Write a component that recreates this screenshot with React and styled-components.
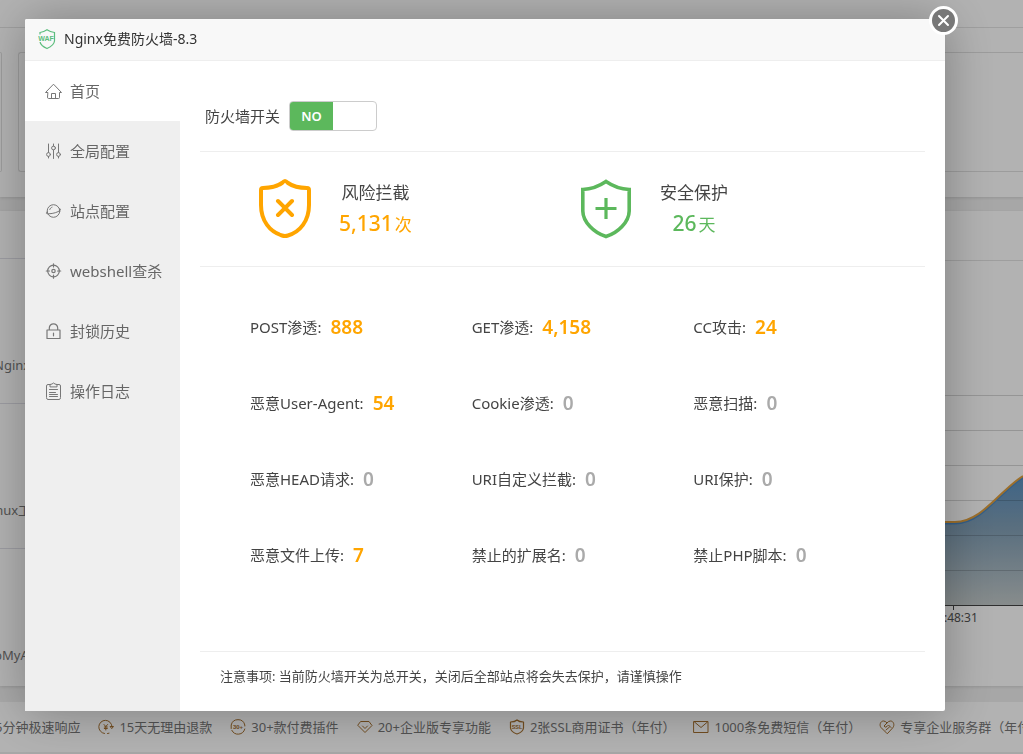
import React, { useState } from "react";
import styled, { createGlobalStyle, css } from "styled-components";

const GlobalStyle = createGlobalStyle`
  * { box-sizing: border-box; }
  html, body { height: 100%; }
  body {
    margin: 0;
    overflow: hidden;
    background: #f0f0f0;
    color: #444;
    font-family: "Noto Sans", "Noto Sans CJK SC", sans-serif;
    font-size: 15px;
    line-height: 20px;
  }
  button, input { font: inherit; }
  p, h1, h2, ul, dl, dd { margin: 0; padding: 0; }
`;

/* ---------- dashboard behind the dialog ---------- */

const Page = styled.div`
  min-height: 100vh;
  overflow: hidden;
  color: #777;
  font-size: 13px;
`;

const Panel = styled.section`
  background: #fff;
  box-shadow: 0 1px 3px rgba(0, 0, 0, 0.12);
`;

const Overview = styled(Panel)`
  height: 197px;
  margin-bottom: 14px;
`;

const OverviewBar = styled.div`
  height: 28px;
  border-bottom: 1px solid #e4e4e4;
`;

const Cards = styled.div`
  display: flex;
  gap: 16px;
  padding-top: 24px;
`;

const Card = styled.div`
  flex: ${(p) => (p.$edge ? "0 0 2px" : "1")};
  height: 120px;
  border: 1px solid #e0e0e0;
  border-width: ${(p) => (p.$edge ? "1px 1px 1px 0" : "1px 0 1px 1px")};
  border-radius: ${(p) => (p.$edge ? "0 3px 3px 0" : "3px 0 0 3px")};
`;

const Columns = styled.div`
  display: grid;
  grid-template-columns: 1fr 1fr;
  gap: 16px;
  margin-bottom: 16px;
`;

const AppList = styled(Panel)`
  height: 475px;
  padding-top: 47px;
`;

const AppCell = styled.div`
  height: 145px;
  padding-top: 96px;
  border-top: 1px solid #e0e0e8;
  text-indent: ${(p) => p.$shift}px;
  white-space: nowrap;
`;

const Traffic = styled(Panel)`
  height: 475px;
  display: flex;
  flex-direction: column;
  align-items: flex-end;
`;

const TrafficHead = styled.div`
  width: 100%;
  height: 50px;
  border-bottom: 1px solid #e2e2e2;
`;

const Chart = styled.svg`
  display: block;
  width: 240px;
  height: 425px;
`;

const Perks = styled.ul`
  display: flex;
  align-items: flex-start;
  gap: 18px;
  height: 50px;
  padding: 15px 0 0;
  background: #fff;
  list-style: none;
  white-space: nowrap;
  margin-left: -5px;
`;

const Perk = styled.li`
  display: flex;
  flex: none;
  align-items: center;
  gap: 5px;
  svg { width: 16px; height: 16px; }
`;

const Shade = styled.div`
  position: fixed;
  inset: 0;
  background: rgba(0, 0, 0, 0.3);
`;

/* ---------- dialog ---------- */

const Dialog = styled.section`
  position: fixed;
  top: 19px;
  left: 25px;
  right: 78px;
  background: #fff;
  border-radius: 2px;
  box-shadow: 1px 1px 50px rgba(0, 0, 0, 0.3);
`;

const DialogHead = styled.header`
  display: flex;
  align-items: center;
  gap: 8px;
  height: 42px;
  padding: 0 13px 2px;
  border-bottom: 1px solid #eee;
  border-radius: 2px 2px 0 0;
  background: #f8f8f8;
  color: #333;
`;

const DialogTitle = styled.h1`
  font-size: 14px;
  font-weight: 400;
`;

const CloseButton = styled.button`
  position: absolute;
  top: -13px;
  right: -13px;
  width: 29px;
  height: 29px;
  padding: 0;
  border: 3px solid #fff;
  border-radius: 50%;
  background: #787878;
  cursor: pointer;
  svg { display: block; margin: auto; }
`;

const DialogBody = styled.div`
  display: flex;
`;

const Side = styled.nav`
  display: flex;
  flex: 0 0 155px;
  flex-direction: column;
  background: #efefef;
`;

const SideItem = styled.button`
  display: flex;
  align-items: center;
  gap: 7px;
  height: 60px;
  padding: 0 0 0 19px;
  border: 0;
  background: ${(p) => (p.$active ? "#fff" : "transparent")};
  color: #666;
  text-align: left;
  white-space: nowrap;
  cursor: pointer;
  svg { width: 19px; height: 19px; }
`;

const Main = styled.main`
  flex: 1;
  min-width: 0;
  padding: 0 20px;
`;

const rule = css`border-bottom: 1px solid #eee;`;

const SwitchRow = styled.label`
  display: flex;
  align-items: center;
  gap: 9px;
  padding: 40px 0 20px 5px;
  ${rule}
`;

const Toggle = styled.span`
  position: relative;
  display: flex;
  width: 88px;
  height: 30px;
  overflow: hidden;
  border: 1px solid #ccc;
  border-radius: 4px;
  background: #fff;
  justify-content: ${(p) => (p.$on ? "flex-start" : "flex-end")};
`;

const ToggleInput = styled.input`
  position: absolute;
  inset: 0;
  width: 100%;
  height: 100%;
  margin: 0;
  opacity: 0;
  cursor: pointer;
`;

const ToggleText = styled.span`
  width: 43px;
  background: #5cb85c;
  color: #fff;
  font-size: 13px;
  font-weight: 600;
  line-height: 29px;
  text-align: center;
`;

const Summary = styled.div`
  display: grid;
  grid-template-columns: 1fr 1fr;
  padding: 26px 25px 26px 58px;
  ${rule}
`;

const SummaryItem = styled.div`
  display: flex;
  gap: 25px;
  svg { flex: none; width: 56px; height: 61px; }
`;

const SummaryText = styled.div`
  text-align: center;
`;

const SummaryLabel = styled.h2`
  font-size: 17px;
  font-weight: 400;
  line-height: 30px;
`;

const SummaryValue = styled.p`
  color: ${(p) => p.$color};
  font-size: 17px;
  line-height: 30px;
  strong { margin-right: 2px; font-size: 21px; font-weight: 500; }
`;

const Counters = styled.dl`
  display: grid;
  grid-template-columns: repeat(3, 1fr);
  padding: 22px 10px 58px 50px;
`;

const Counter = styled.div`
  display: flex;
  align-items: center;
  gap: 9px;
  height: 76px;
  white-space: nowrap;
`;

const CounterValue = styled.dd`
  color: ${(p) => (p.$hot ? "#ffa500" : "#aaa")};
  font-size: 19px;
  font-weight: 600;
`;

const Note = styled.footer`
  height: 60px;
  padding: 14px 20px 0;
  border-top: 1px solid #eee;
  font-size: 13px;
`;

/* ---------- drawings ---------- */

const Line = ({ size = 19, box = 19, color = "#777", width = 1, children }) => (
  <svg width={size} height={size} viewBox={`0 0 ${box} ${box}`} fill="none" stroke={color}
    strokeWidth={width} strokeLinecap="round" strokeLinejoin="round" aria-hidden="true">
    {children}
  </svg>
);

const sideIcons = {
  home: <Line><path d="M3.5 10.5H1.5L9.500 2.200 17.500 10.5H15.500V15.500Q15.500 16.500 14.500 16.500H4.500Q3.500 16.500 3.500 15.500ZM7.500 16.500V11.500H11.500V16.500" /></Line>,
  sliders: <Line><path d="M4.500 2V10.500M4.500 14.500V16M9.500 2V4M9.500 8V16.500M14.500 2V10.500M14.500 14.500V16" /><circle cx="4.500" cy="12.500" r="1.900" /><circle cx="9.500" cy="6" r="1.900" /><circle cx="14.500" cy="12.500" r="1.900" /></Line>,
  planet: <Line><circle cx="9.500" cy="9" r="6.300" /><path d="M3.300 9.500C1.500 11.200 2 12 5 11.800C9 11.600 14 10.300 16 8.300C17 7.200 16.500 6.700 15.500 6.700M5.800 7.500C6.200 6.300 7 5.500 8 5.200" /></Line>,
  target: <Line width={1.2}><circle cx="9.500" cy="9" r="5.800" /><circle cx="9.500" cy="9" r="1.700" /><path d="M9.500 1.800V5M9.500 13V16.200M2.300 9H5.500M13.500 9H16.700" /></Line>,
  lock: <Line width={1.2}><path d="M3 8H16V16.500H3ZM5.300 8V6C5.300 3.500 7.200 1.800 9.500 1.800S13.700 3.500 13.700 6V8M9.500 11V13.800" /></Line>,
  clipboard: <Line><path d="M6 2.500H4Q2.500 2.500 2.500 4V15.500Q2.500 17.500 4 17.500H15Q16.500 17.500 16.500 15.500V4Q16.500 2.500 15 2.500H13M6 4.500V2.500L8 2Q9.500 0 11 2L13 2.500V4.500ZM5.500 7.500H13.500M5.500 10.500H11.500M5.500 12.500H13.500M5.500 14.500H13.500" /></Line>,
};

const WafLogo = () => (
  <svg width="18" height="22" viewBox="0 0 18 22" aria-hidden="true">
    <path d="M2 6.500V4.500Q6 4 9 1.800Q12 4 16.500 4.500V13Q16 17.500 9 20.500Q3 18 2 14" fill="none" stroke="#5cbd7d" strokeWidth="1.200" />
    <path d="M0 7H15V14H0Z" fill="#f8f8f8" />
    <text x="8" y="13" textAnchor="middle" fontSize="7" fontWeight="700" fontFamily="Liberation Sans, sans-serif" fill="#5cbd7d">WAF</text>
  </svg>
);

const ShieldCross = () => (
  <svg viewBox="0 0 56 61" fill="none" stroke="#ffa500" strokeLinecap="round" strokeLinejoin="round" aria-hidden="true">
    <path d="M27 3Q26 3 24 5Q17 10 5 10Q3 10 3 12V27C3 43 12 54 24 57.500Q27 58.500 30 57.500C42 54 51 43 51 27V12Q51 10 49 10Q37 10 30 5Q28 3 27 3Z" strokeWidth="4" />
    <path d="M20 23 34 37M34 23 20 37" strokeWidth="4" />
  </svg>
);

const ShieldPlus = () => (
  <svg viewBox="0 0 56 61" fill="none" stroke="#5cb85c" aria-hidden="true">
    <path d="M27 3.500Q16 11 3.800 11.500V33C4 44 15 55 27 58.500C39 55 50 44 50.200 33V11.500Q38 11 27 3.500Z" strokeWidth="3.600" />
    <path d="M27 20V41M16.500 30.500H37.500" strokeWidth="3.200" />
  </svg>
);

const gold = "#a5702f";
const Small = ({ children }) => <Line size={16} box={16} color={gold}>{children}</Line>;
const Tiny = ({ y, size, children }) => (
  <text x="8" y={y} textAnchor="middle" fontSize={size} fontWeight="700" stroke="none" fill={gold} fontFamily="Liberation Sans, sans-serif">{children}</text>
);

const perkIcons = {
  refund: <Small><path d="M6.500 14.500A6.600 6.600 0 1 1 14 7.500M12.500 7.500H15.500L14 9.300ZM9.500 14.500 11 14.200" /><path d="M6 5.500 7.800 7.500 9.600 5.500M7.800 7.500V11M6.300 8H9.300M6.300 9.500H9.300" /></Small>,
  plugins: <Small><path d="M1.200 9.500V6A7 7 0 0 1 14.800 6V7M14.800 10A7 7 0 0 1 1.800 11.300" /><Tiny y="10.300" size="6">30+</Tiny></Small>,
  gem: <Small><path d="M4 2.500H12L15 6.500 8 13.500 1 6.500ZM5.500 7 8 9.500 10.500 7" /></Small>,
  ssl: <Small><path d="M1.500 3Q6 3 8 1Q10 3 14.500 3V9Q14 13 8 15Q2 13 1.500 9Z" strokeWidth="1.200" /><Tiny y="9.800" size="5.500">SSL</Tiny></Small>,
  mail: <Small><path d="M1 2.500H15V13.500H1ZM1.500 3 8 8.500 14.500 3" /></Small>,
  heart: <Small><path d="M8 14.500 2 8.500C0 6 1.500 2 4.500 2Q6.500 2 8 4Q9.500 2 11.500 2C14.500 2 16 6 14 8.500ZM8 4 5 7Q6 9 8 7.500L9.500 6 12 8.500M7 11 10.500 8" /></Small>,
};

const perks = [
  { text: "5分钟极速响应" },
  { icon: "refund", text: "15天无理由退款" },
  { icon: "plugins", text: "30+款付费插件" },
  { icon: "gem", text: "20+企业版专享功能" },
  { icon: "ssl", text: "2张SSL商用证书（年付）" },
  { icon: "mail", text: "1000条免费短信（年付）" },
  { icon: "heart", text: "专享企业服务群（年付）" },
];

const menu = [
  ["home", "首页"],
  ["sliders", "全局配置"],
  ["planet", "站点配置"],
  ["target", "webshell查杀"],
  ["lock", "封锁历史"],
  ["clipboard", "操作日志"],
];

const counters = [
  ["POST渗透", "888"], ["GET渗透", "4,158"], ["CC攻击", "24"],
  ["恶意User-Agent", "54"], ["Cookie渗透", "0"], ["恶意扫描", "0"],
  ["恶意HEAD请求", "0"], ["URI自定义拦截", "0"], ["URI保护", "0"],
  ["恶意文件上传", "7"], ["禁止的扩展名", "0"], ["禁止PHP脚本", "0"],
];

const TrafficChart = () => (
  <Chart viewBox="0 0 240 425" aria-hidden="true">
    <defs>
      <linearGradient id="fill" x1="0" y1="0" x2="0" y2="1">
        <stop offset="0" stopColor="#5a90c0" />
        <stop offset="0.4" stopColor="#819fb6" />
        <stop offset="1" stopColor="#c2c9c9" />
      </linearGradient>
    </defs>
    <path d="M0 261H172C199 261 218 228 240 215V344H0Z" fill="url(#fill)" />
    <path d="M0 134.500H240M0 169.500H240M0 204.500H240M0 239.500H240M0 274.500H240M0 309.500H240" stroke="#000" strokeOpacity="0.160" />
    <path d="M0 262.500H172C199 262.500 218 229.500 240 216.500" fill="none" stroke="#4a88c4" strokeWidth="2" />
    <path d="M0 261H172C199 261 218 228 240 215" fill="none" stroke="#e0a040" strokeWidth="2" />
    <path d="M0 344.500H240M170.500 344V349" stroke="#444" />
    <text x="171" y="361" textAnchor="middle" fontSize="12" fill="#555">16:48:31</text>
  </Chart>
);

export default function App() {
  const [on, setOn] = useState(true);
  const [active, setActive] = useState("home");

  return (
    <>
      <GlobalStyle />
      <Page>
        <Overview>
          <OverviewBar />
          <Cards>
            <Card $edge />
            <Card />
          </Cards>
        </Overview>
        <Columns>
          <AppList>
            <AppCell $shift={-6}>Nginx</AppCell>
            <AppCell $shift={-15}>Linux工</AppCell>
            <AppCell $shift={-22}>phpMyA</AppCell>
          </AppList>
          <Traffic>
            <TrafficHead />
            <TrafficChart />
          </Traffic>
        </Columns>
        <Perks>
          {perks.map((p) => (
            <Perk key={p.text}>
              {p.icon && perkIcons[p.icon]}
              <span>{p.text}</span>
            </Perk>
          ))}
        </Perks>
      </Page>
      <Shade />
      <Dialog role="dialog" aria-labelledby="dialog-title">
        <DialogHead>
          <WafLogo />
          <DialogTitle id="dialog-title">Nginx免费防火墙-8.3</DialogTitle>
        </DialogHead>
        <CloseButton type="button" aria-label="关闭">
          <Line size={13} box={13} color="#fff" width={2}><path d="M2 2 11 11M11 2 2 11" /></Line>
        </CloseButton>
        <DialogBody>
          <Side>
            {menu.map(([id, label]) => (
              <SideItem key={id} type="button" $active={active === id} onClick={() => setActive(id)}>
                {sideIcons[id]}
                <span>{label}</span>
              </SideItem>
            ))}
          </Side>
          <Main>
            <SwitchRow>
              <span>防火墙开关</span>
              <Toggle $on={on}>
                <ToggleText>{on ? "NO" : "OFF"}</ToggleText>
                <ToggleInput type="checkbox" role="switch" checked={on} onChange={() => setOn(!on)} />
              </Toggle>
            </SwitchRow>
            <Summary>
              <SummaryItem>
                <ShieldCross />
                <SummaryText>
                  <SummaryLabel>风险拦截</SummaryLabel>
                  <SummaryValue $color="#ffa500"><strong>5,131</strong>次</SummaryValue>
                </SummaryText>
              </SummaryItem>
              <SummaryItem>
                <ShieldPlus />
                <SummaryText>
                  <SummaryLabel>安全保护</SummaryLabel>
                  <SummaryValue $color="#5cb85c"><strong>26</strong>天</SummaryValue>
                </SummaryText>
              </SummaryItem>
            </Summary>
            <Counters>
              {counters.map(([label, value]) => (
                <Counter key={label}>
                  <dt>{label}:</dt>
                  <CounterValue $hot={value !== "0"}>{value}</CounterValue>
                </Counter>
              ))}
            </Counters>
            <Note>注意事项: 当前防火墙开关为总开关，关闭后全部站点将会失去保护，请谨慎操作</Note>
          </Main>
        </DialogBody>
      </Dialog>
    </>
  );
}
